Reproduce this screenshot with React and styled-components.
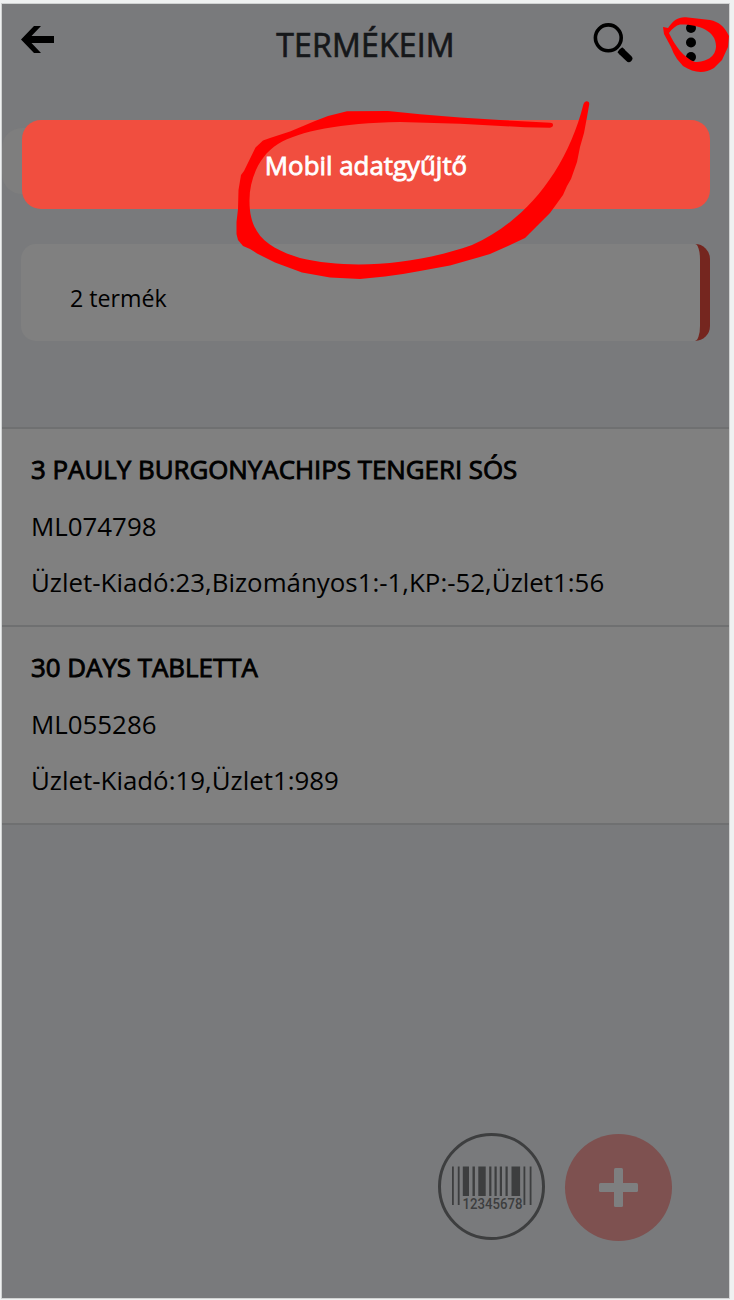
import React from "react";
import styled, { createGlobalStyle } from "styled-components";

const GlobalStyle = createGlobalStyle`
  * {
    box-sizing: border-box;
  }

  body {
    margin: 0;
    background-color: #eff1f1;
    font-family: "Open Sans", "Noto Sans", sans-serif;
  }
`;

const Page = styled.div`
  position: relative;
  height: 1300px;
  padding: 3px 4px 1px 1px;
`;

const Screen = styled.main`
  display: flex;
  flex-direction: column;
  height: 1296px;
  border: 1px solid #d0d2d2;
  background-color: #797a7c;
  color: #000;
`;

const Header = styled.header`
  display: grid;
  grid-template-columns: 1fr auto 1fr;
  height: 116px;
  padding: 13px 33px 0 19px;
`;

const Title = styled.h1`
  margin: 4px -7px 0 7px;
  font-size: 32px;
  font-weight: 400;
  line-height: 48px;
  letter-spacing: 0.2px;
  color: #15171a;
  -webkit-text-stroke: 0.7px #15171a;
`;

const Actions = styled.div`
  display: flex;
  justify-content: flex-end;
  gap: 53px;
`;

const IconButton = styled.button`
  display: flex;
  align-self: flex-start;
  margin: ${(props) => props.$top}px 0 0;
  padding: 0;
  border: none;
  background-color: transparent;
`;

const MenuArea = styled.section`
  display: grid;
  height: 90px;
`;

const SearchField = styled.div`
  grid-area: 1 / 1;
  height: 66px;
  margin: 8px 19px 0 0;
  border-radius: 20px;
  background-color: #7e7e7e;
`;

const MenuOption = styled.button`
  grid-area: 1 / 1;
  z-index: 1;
  height: 89px;
  margin: 0 19px 0 20px;
  padding: 1px 0 0;
  border: none;
  border-radius: 19px;
  background-color: #f14e3f;
  color: #fff;
  font-family: inherit;
  font-size: 25.87px;
  -webkit-text-stroke: 0.8px #fff;
`;

const Summary = styled.section`
  display: flex;
  align-items: center;
  height: 97px;
  margin: 34px 19px 86px 19px;
  padding: 11px 0 0 49px;
  border-right: 10px solid #75261f;
  border-radius: 15px;
  background-color: #808080;
  font-size: 23.2px;
  line-height: 32px;
`;

const List = styled.ul`
  margin: 0;
  padding: 0;
  border-top: 2px solid #6f7071;
  list-style: none;
`;

const Item = styled.li`
  height: 198px;
  padding: 12px 29px 0;
  border-bottom: 2px solid #6f7071;
  background-color: #808080;
`;

const Name = styled.h2`
  margin: 0;
  font-size: 25.87px;
  font-weight: 400;
  line-height: 57px;
  -webkit-text-stroke: 0.9px #000;
`;

const Detail = styled.p`
  margin: 0;
  font-size: 25.87px;
  line-height: 56px;
`;

const Footer = styled.footer`
  display: flex;
  justify-content: flex-end;
  gap: 20px;
  margin-top: auto;
  padding: 0 57px 57px 0;
`;

const RoundButton = styled.button`
  display: flex;
  align-items: center;
  justify-content: center;
  width: 107px;
  height: 107px;
  margin-top: ${(props) => (props.$filled ? 1 : 0)}px;
  padding: 0;
  border: ${(props) => (props.$filled ? "none" : "3px solid #3d3e3f")};
  border-radius: 50%;
  background-color: ${(props) => (props.$filled ? "#7e5150" : "transparent")};
`;

const Marker = styled.svg`
  position: absolute;
  top: 0;
  left: 0;
  z-index: 2;
  pointer-events: none;
  fill: #ff0000;
`;

const products = [
  {
    code: "ML074798",
    name: "3 PAULY BURGONYACHIPS TENGERI SÓS",
    stock: "Üzlet-Kiadó:23,Bizományos1:-1,KP:-52,Üzlet1:56",
  },
  {
    code: "ML055286",
    name: "30 DAYS TABLETTA",
    stock: "Üzlet-Kiadó:19,Üzlet1:989",
  },
];

// [x, width, height]
const bars = [
  [0, 1.8, 38.5],
  [5.8, 1.8, 38.5],
  [10.8, 6.2, 29.5],
  [20.5, 2.4, 29.5],
  [26.3, 7.4, 29.5],
  [37.2, 2.2, 29.5],
  [42.5, 2.2, 29.5],
  [47.8, 2.2, 29.5],
  [53.5, 2.2, 29.5],
  [59.5, 8.6, 29.5],
  [71.5, 1.8, 38.5],
  [77.7, 1.8, 38.5],
];

const BackIcon = () => (
  <svg width="33" height="27" viewBox="0 0 33 27">
    <path d="M0 13.5 13 0H20L10.5 10H33V17H10.5L20 27H13Z" />
  </svg>
);

const SearchIcon = () => (
  <svg width="40" height="40" viewBox="0 0 40 40" fill="none" stroke="#000">
    <circle cx="15.3" cy="14.8" r="12.9" strokeWidth="3.6" />
    <path d="M26.8 26.8 29.5 29.3" strokeWidth="7" />
    <path d="M29 28.9 35.8 35.5" strokeWidth="7" strokeLinecap="round" />
  </svg>
);

const MoreIcon = () => (
  <svg width="10" height="40" viewBox="0 0 10 40">
    <circle cx="5" cy="5" r="5" />
    <circle cx="5" cy="19.5" r="5" />
    <circle cx="5" cy="34" r="5" />
  </svg>
);

const BarcodeIcon = () => (
  <svg width="80" height="52" viewBox="0 0 80 52" fill="#3d3e3f">
    {bars.map(([x, width, height]) => (
      <rect key={x} x={x} y="5.5" width={width} height={height} />
    ))}
    <text
      x="10.5"
      y="48"
      fontFamily="Roboto, sans-serif"
      fontSize="13.8"
      fontWeight="500"
      textLength="60"
      lengthAdjust="spacingAndGlyphs"
    >
      12345678
    </text>
  </svg>
);

const PlusIcon = () => (
  <svg width="39" height="39" viewBox="0 0 39 39" fill="#7e7f80">
    <rect x="0" y="15" width="39" height="9" rx="1.5" />
    <rect x="15" y="0" width="9" height="39" rx="1.5" />
  </svg>
);

const Highlights = () => (
  <Marker width="734" height="300" viewBox="0 0 734 300">
    <path d="M550 122.7Q553 122.8 553 125T550 127.7L525 127.3 460 123.7 400 122C340 123 300 131 278 144C260 155 249.5 178 249.5 200C249 235 268 248 300 258C350 270 415 265 472 245C525 222 567 170 583.5 104Q584.5 101 587 101.3T589.3 104L587 117 584 133 580 147 577 162 571 179 567 186 563 195 550 213 537 226 530 233 525 238 508 246 490 254 479 257.3 450 265.5 420 271 403 274 385 276.5 360 279 330 277.5 302 272.5 275 262.5 257 253.5 250 249 243 246 238 240 236.5 234 236.5 222 238 209 238.5 190 241 175 244 171 255.5 147.5 263 140.5 270 138 290 131.5 315 121 328 116 347 111.2 388 111 420 114.2 460 117.5 500 120Z" />
    <path
      fillRule="evenodd"
      d="M663 27 668 28C674 19 680 16 688 17.5L710 20C719 22 724 26 729 36L728 47 722 60 714 68C704 74 694 73 683 66L677 59Q673 53 671 47L664 34ZM669 33C675 46 684 58 695 62C706 62 716 57 716 46C716 30 697 24 680 24.5Q674 26 669 33Z"
    />
  </Marker>
);

const App = () => {
  return (
    <>
      <GlobalStyle />
      <Page>
        <Screen>
          <Header>
            <IconButton $top={9} aria-label="Vissza">
              <BackIcon />
            </IconButton>
            <Title>TERMÉKEIM</Title>
            <Actions>
              <IconButton $top={6} aria-label="Keresés">
                <SearchIcon />
              </IconButton>
              <IconButton $top={6} aria-label="Menü">
                <MoreIcon />
              </IconButton>
            </Actions>
          </Header>

          <MenuArea>
            <SearchField />
            <MenuOption>Mobil adatgyűjtő</MenuOption>
          </MenuArea>

          <Summary>{products.length} termék</Summary>

          <List>
            {products.map((product) => (
              <Item key={product.code}>
                <Name>{product.name}</Name>
                <Detail>{product.code}</Detail>
                <Detail>{product.stock}</Detail>
              </Item>
            ))}
          </List>

          <Footer>
            <RoundButton aria-label="Vonalkód">
              <BarcodeIcon />
            </RoundButton>
            <RoundButton $filled aria-label="Hozzáadás">
              <PlusIcon />
            </RoundButton>
          </Footer>
        </Screen>
        <Highlights />
      </Page>
    </>
  );
};

export default App;
